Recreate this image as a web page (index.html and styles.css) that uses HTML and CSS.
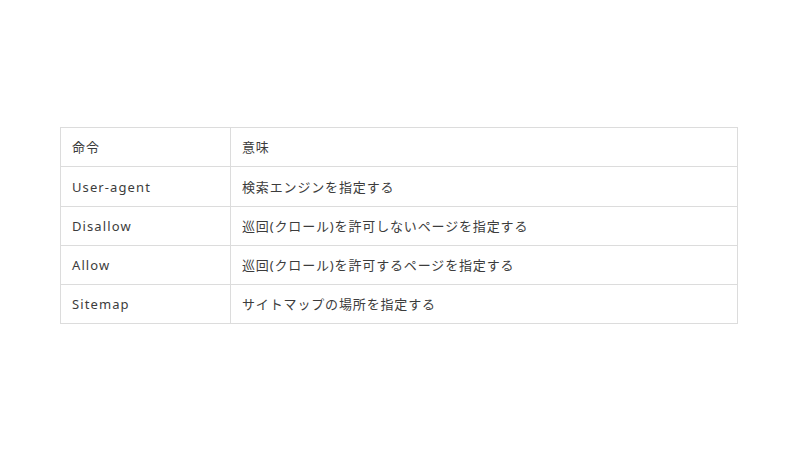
FILE: index.html
```html
<!DOCTYPE html>
<html lang="ja">
<head>
<meta charset="utf-8">
<link rel="stylesheet" href="styles.css">
</head>
<body>
<main class="page">
  <table class="cmd-table">
    <tbody>
      <tr><td class="c1">命令</td><td class="c2">意味</td></tr>
      <tr class="tall"><td class="c1">User-agent</td><td class="c2">検索エンジンを指定する</td></tr>
      <tr><td class="c1">Disallow</td><td class="c2">巡回(クロール)を許可しないページを指定する</td></tr>
      <tr><td class="c1">Allow</td><td class="c2">巡回(クロール)を許可するページを指定する</td></tr>
      <tr><td class="c1">Sitemap</td><td class="c2">サイトマップの場所を指定する</td></tr>
    </tbody>
  </table>
</main>
</body>
</html>
```
FILE: styles.css
```css
html, body {
  margin: 0;
  padding: 0;
  background: #ffffff;
}
.page {
  padding: 127px 0 0 60px;
}
.cmd-table {
  border-collapse: collapse;
  width: 678px;
  font-family: "Noto Sans", "Noto Sans CJK JP", sans-serif;
  font-size: 13px;
  color: #3c3c3c;
}
.cmd-table td {
  border: 1px solid #dcdcdc;
  height: 39px;
  padding: 0 11px;
  box-sizing: border-box;
  vertical-align: middle;
  line-height: 18px;
}
.cmd-table tr.tall td {
  height: 40px;
}
.cmd-table .c1 {
  width: 170px;
  letter-spacing: 1.1px;
}
.cmd-table .c2 {
  letter-spacing: 0.85px;
}
```
